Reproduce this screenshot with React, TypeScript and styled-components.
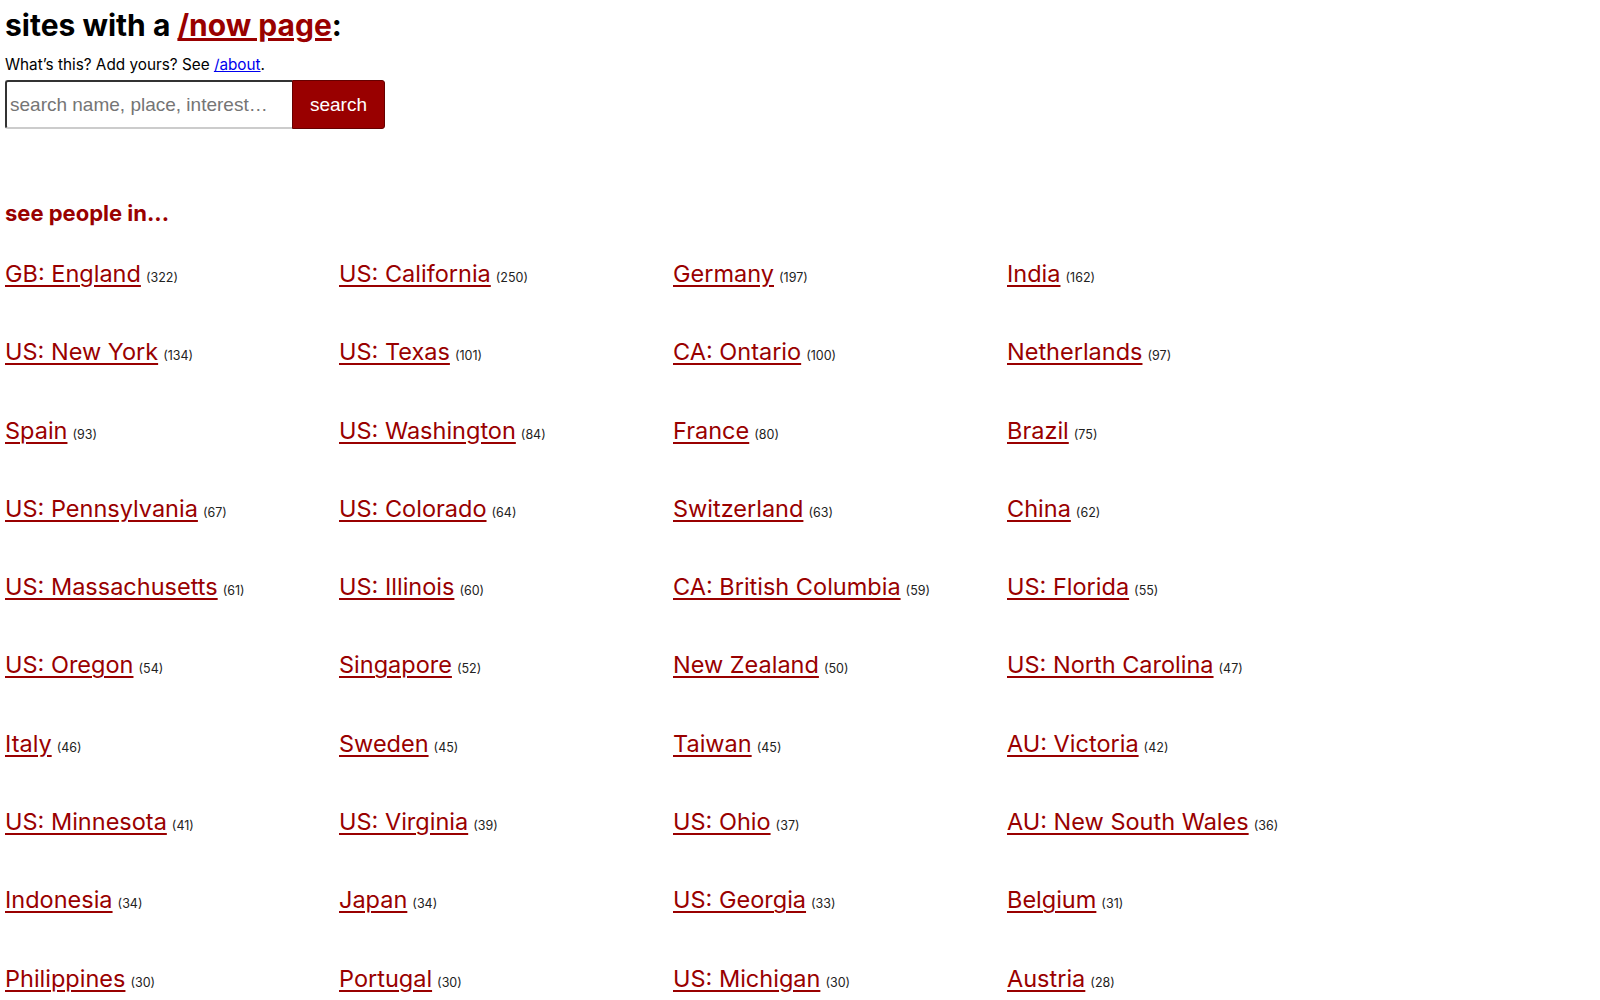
import styled, { createGlobalStyle } from "styled-components";

const GlobalStyle = createGlobalStyle`
  body {
    margin: 0;
    padding: 5px;
    font-family: Inter, "Noto Sans", sans-serif;
    color: #000;
    background: #fff;
  }
`;

const RED = "#990000";

const Title = styled.h1`
  margin: 0;
  font-size: 30px;
  font-weight: 700;
  line-height: 40px;

  a {
    color: ${RED};
  }
`;

const Intro = styled.p`
  margin: 10px 0 0;
  font-size: 15.3px;
  line-height: 20px;

  a {
    color: #0000ee;
  }
`;

const SearchForm = styled.form`
  display: flex;
  margin-top: 5px;
  height: 49px;
`;

const SearchInput = styled.input`
  box-sizing: border-box;
  width: 287px;
  height: 49px;
  padding: 0 3px;
  border: 2px solid #333;
  border-right: none;
  border-bottom-color: #ccc;
  border-radius: 3px 0 0 3px;
  font-family: "Liberation Sans", Arial, sans-serif;
  font-size: 19px;
  outline: none;

  &::placeholder {
    color: #757575;
  }
`;

const SearchButton = styled.button`
  box-sizing: border-box;
  width: 93px;
  height: 49px;
  border: 1px solid #660000;
  border-radius: 0 3px 3px 0;
  background: ${RED};
  color: #fff;
  font-family: "Liberation Sans", Arial, sans-serif;
  font-size: 19px;
`;

const SectionTitle = styled.h2`
  margin: 69px 0 0;
  font-size: 22px;
  line-height: 30px;
  font-weight: 700;
  color: ${RED};
`;

const PlaceGrid = styled.ul`
  list-style: none;
  margin: 31px 0 0;
  padding: 0;
  display: grid;
  grid-template-columns: repeat(4, 334px);
  grid-auto-rows: 78.3px;
`;

const Place = styled.li`
  font-size: 23.5px;
  line-height: 30px;

  a {
    color: ${RED};
    text-decoration-thickness: 2px;
    text-underline-offset: 3px;
  }
`;

const Count = styled.small`
  font-size: 12.5px;
  margin-left: 5px;
  color: #222;
`;

const places: [string, number][] = [
  ["GB: England", 322],
  ["US: California", 250],
  ["Germany", 197],
  ["India", 162],
  ["US: New York", 134],
  ["US: Texas", 101],
  ["CA: Ontario", 100],
  ["Netherlands", 97],
  ["Spain", 93],
  ["US: Washington", 84],
  ["France", 80],
  ["Brazil", 75],
  ["US: Pennsylvania", 67],
  ["US: Colorado", 64],
  ["Switzerland", 63],
  ["China", 62],
  ["US: Massachusetts", 61],
  ["US: Illinois", 60],
  ["CA: British Columbia", 59],
  ["US: Florida", 55],
  ["US: Oregon", 54],
  ["Singapore", 52],
  ["New Zealand", 50],
  ["US: North Carolina", 47],
  ["Italy", 46],
  ["Sweden", 45],
  ["Taiwan", 45],
  ["AU: Victoria", 42],
  ["US: Minnesota", 41],
  ["US: Virginia", 39],
  ["US: Ohio", 37],
  ["AU: New South Wales", 36],
  ["Indonesia", 34],
  ["Japan", 34],
  ["US: Georgia", 33],
  ["Belgium", 31],
  ["Philippines", 30],
  ["Portugal", 30],
  ["US: Michigan", 30],
  ["Austria", 28],
];

export default function App() {
  return (
    <>
      <GlobalStyle />
      <Title>
        sites with a <a href="#">/now page</a>:
      </Title>
      <Intro>
        What’s this? Add yours? See <a href="#">/about</a>.
      </Intro>
      <SearchForm onSubmit={(e) => e.preventDefault()}>
        <SearchInput placeholder="search name, place, interest…" />
        <SearchButton type="submit">search</SearchButton>
      </SearchForm>
      <SectionTitle>see people in...</SectionTitle>
      <PlaceGrid>
        {places.map(([name, count]) => (
          <Place key={name}>
            <a href="#">{name}</a>
            <Count>({count})</Count>
          </Place>
        ))}
      </PlaceGrid>
    </>
  );
}
